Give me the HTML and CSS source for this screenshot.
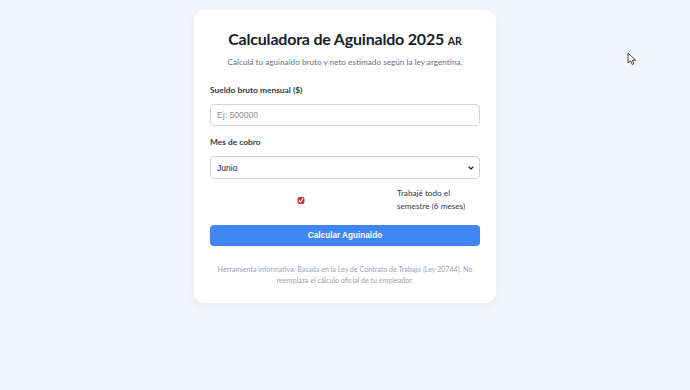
FILE: index.html
```html
<!DOCTYPE html>
<html lang="es">
<head>
<meta charset="utf-8">
<link rel="stylesheet" href="styles.css">
</head>
<body>
<main class="card">
  <h1 class="title">Calculadora de Aguinaldo 2025 <span class="flag">AR</span></h1>
  <p class="subtitle">Calculá tu aguinaldo bruto y neto estimado según la ley argentina.</p>
  <div class="field">
    <label class="label" for="sueldo">Sueldo bruto mensual ($)</label>
    <input class="input" id="sueldo" type="text" placeholder="Ej: 500000">
  </div>
  <div class="field">
    <label class="label" for="mes">Mes de cobro</label>
    <div class="select-wrap">
      <select class="input select" id="mes">
        <option>Junio</option>
        <option>Diciembre</option>
      </select>
      <svg class="chev" width="6" height="4" viewBox="0 0 6 4"><path d="M0.6 0.6 L3 3 L5.4 0.6" fill="none" stroke="#222" stroke-width="1.3"/></svg>
    </div>
  </div>
  <label class="check">
    <input class="checkbox" type="checkbox" checked>
    <span class="check-text">Trabajé todo el semestre (6 meses)</span>
  </label>
  <button class="btn" type="button">Calcular Aguinaldo</button>
  <p class="note">Herramienta informativa. Basada en la Ley de Contrato de Trabajo (Ley 20744). No reemplaza el cálculo oficial de tu empleador.</p>
</main>
<svg class="cursor" width="10" height="14" viewBox="0 0 10 14"><path d="M1 1 L1 11 L3.5 8.8 L5.2 12.5 L6.8 11.8 L5.2 8.2 L8.6 8.2 Z" fill="#fff" stroke="#444" stroke-width="1"/></svg>
</body>
</html>
```
FILE: styles.css
```css
html, body {
  margin: 0;
  padding: 0;
}
body {
  background: #f4f5fb;
  font-family: Lato, "Open Sans", sans-serif;
  color: #1f2937;
  width: 690px;
  height: 390px;
  position: relative;
  overflow: hidden;
}
.card {
  box-sizing: border-box;
  width: 302px;
  margin: 10px 0 0 194px;
  background: #fff;
  border-radius: 10px;
  box-shadow: 0 2px 8px rgba(30, 40, 80, 0.06);
  padding: 18px 16px 17px;
  display: flex;
  flex-direction: column;
}
.title {
  margin: 0;
  text-align: center;
  font-size: 16px;
  font-weight: 700;
  letter-spacing: -0.2px;
  color: #1a1d29;
  line-height: 22px;
}
.flag {
  font-size: 10.5px;
  letter-spacing: 0;
}
.subtitle {
  margin: 4px 0 0;
  text-align: center;
  font-size: 8.2px;
  color: #6b7280;
  line-height: 12px;
}
.field {
  display: flex;
  flex-direction: column;
  margin-top: 16px;
}
.field + .field {
  margin-top: 10px;
}
.label {
  font-size: 8.4px;
  font-weight: 700;
  color: #343a46;
  line-height: 12px;
  margin-bottom: 8px;
}
.input {
  box-sizing: border-box;
  width: 100%;
  height: 22px;
  border: 1px solid #d1d5db;
  border-radius: 4px;
  padding: 0 6px;
  font-family: "Liberation Sans", Arial, sans-serif;
  font-size: 8.6px;
  color: #222;
  background: #fff;
}
.input::placeholder {
  color: #8f8f8f;
}
.select-wrap {
  position: relative;
}
.select {
  display: block;
  height: 23px;
  padding: 0 6px;
  appearance: none;
  -webkit-appearance: none;
}
.chev {
  position: absolute;
  right: 6px;
  top: 10px;
  pointer-events: none;
}
.check {
  display: flex;
  align-items: center;
  gap: 5px;
  margin-top: 8px;
  font-size: 8.2px;
  color: #333a46;
  line-height: 13px;
}
.checkbox {
  flex: 1 1 auto;
  width: 100%;
  height: 7px;
  margin: 0;
  accent-color: #d32f2f;
}
.check-text {
  flex: 0 0 83px;
}
.btn {
  margin-top: 12px;
  height: 21px;
  border: none;
  border-radius: 4px;
  background: #4285f4;
  color: #fff;
  font-family: "Liberation Sans", Arial, sans-serif;
  font-weight: 700;
  font-size: 8.2px;
}
.note {
  margin: 18px 0 0;
  text-align: center;
  font-size: 7.1px;
  line-height: 11px;
  color: #9ca3af;
}
.cursor {
  position: absolute;
  left: 627px;
  top: 52px;
}
```
